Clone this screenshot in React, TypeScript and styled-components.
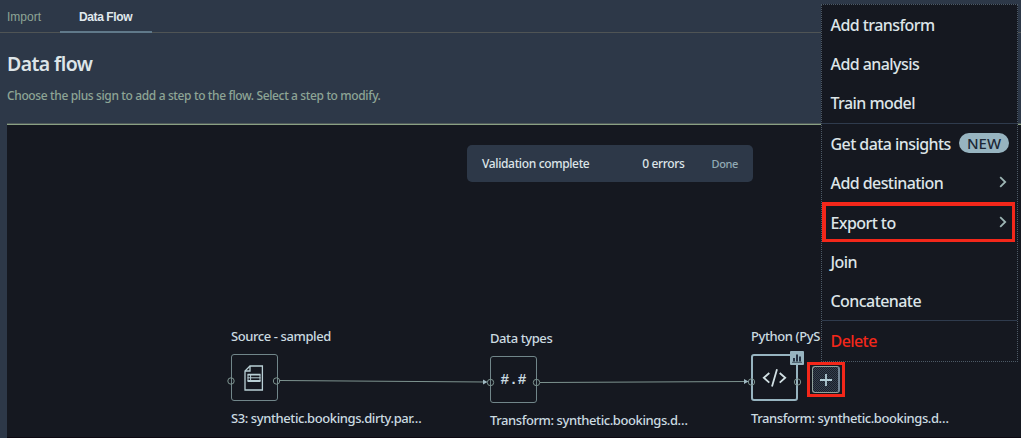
import React from 'react';
import styled, { createGlobalStyle, css } from 'styled-components';

const color = {
  header: '#2d3848',
  canvas: '#151820',
  text: '#dde5e8',
  label: '#cbdbe0',
  muted: '#8ea596',
  accent: '#97b4c0',
  line: '#71868a',
  red: '#f3271a',
};

const GlobalStyle = createGlobalStyle`
  *, *::before, *::after { box-sizing: border-box; }
  body {
    margin: 0;
    overflow: hidden;
    background: ${color.header};
    font-family: 'Noto Sans', 'Open Sans', sans-serif;
    font-weight: 500;
    color: ${color.text};
  }
`;

const Page = styled.div`
  position: relative;
  display: flex;
  flex-direction: column;
  height: 438px;
  overflow: hidden;
`;

const Tabs = styled.nav`
  display: flex;
  flex: none;
  height: 33px;
  border-bottom: 1px solid #4f5455;
`;

const Tab = styled.div<{ $active?: boolean }>`
  height: 33px;
  padding: 0 19px 0 7px;
  font: 400 12px/34px 'Liberation Sans', Arial, sans-serif;
  color: ${color.muted};
  ${(p) =>
    p.$active &&
    css`
      width: 92px;
      padding: 0 19px;
      font-weight: 700;
      letter-spacing: -0.4px;
      white-space: nowrap;
      color: #e0e9ee;
      border-bottom: 2px solid #60798a;
    `}
`;

const Heading = styled.header`
  flex: none;
  height: 90px;
  padding: 18px 7px 0;
`;

const Title = styled.h1`
  margin: 0;
  font-size: 19.5px;
  font-weight: 600;
  line-height: 26px;
  letter-spacing: -0.6px;
`;

const Description = styled.p`
  margin: 10px 0 0;
  font-size: 12px;
  line-height: 18px;
  letter-spacing: -0.37px;
  color: ${color.muted};
`;

const Canvas = styled.main`
  position: relative;
  flex: 1;
  margin-left: 7px;
  background: ${color.canvas};
  border-top: 1px solid #505a5b;
  border-bottom: 1px solid #0d0912;
  box-shadow: inset 0 1px #8aa083;
`;

const Toast = styled.div`
  position: absolute;
  left: 460px;
  top: 21px;
  width: 286px;
  height: 37px;
  padding: 0 15px;
  display: flex;
  align-items: center;
  border-radius: 5px;
  background: ${color.header};
  font-size: 12px;
  letter-spacing: -0.36px;
`;

const ToastCount = styled.span`
  margin-left: auto;
`;

const ToastAction = styled.span`
  margin-left: 27px;
  font-size: 11px;
  color: #91aab4;
`;

const Edges = styled.svg`
  position: absolute;
  inset: 0;
  width: 100%;
  height: 100%;
`;

const Node = styled.section<{ $x: number; $y: number }>`
  position: absolute;
  left: ${(p) => p.$x}px;
  top: ${(p) => p.$y}px;
  width: 200px;
`;

const NodeText = styled.div`
  height: 18px;
  font-size: 13px;
  line-height: 18px;
  letter-spacing: -0.41px;
  white-space: nowrap;
  color: ${color.label};
`;

const NodeBox = styled.div<{ $selected?: boolean }>`
  position: relative;
  display: flex;
  align-items: center;
  justify-content: center;
  width: 47px;
  height: 47px;
  margin: 9px 0 8px;
  border-radius: 3px;
  border: ${(p) => (p.$selected ? `2px solid ${color.accent}` : `1px solid ${color.line}`)};
`;

const TypeGlyph = styled.span`
  font: 700 14.4px/20px 'Liberation Mono', monospace;
  color: ${color.label};
`;

const Badge = styled.span`
  position: absolute;
  right: -8px;
  top: -5px;
  display: flex;
  width: 14px;
  height: 14px;
  background: ${color.accent};
  border-radius: 1px;
`;

const Menu = styled.div`
  position: absolute;
  left: 821px;
  top: 4px;
  width: 197px;
  height: 358px;
  padding-top: 1px;
  background: ${color.canvas};
  border: 1px dotted #4d5a66;
  font-size: 16px;
  letter-spacing: -0.57px;
  white-space: nowrap;
`;

const MenuItem = styled.div<{ $danger?: boolean }>`
  display: flex;
  align-items: center;
  height: 39px;
  padding: 0 10px 0 8.5px;
  color: ${(p) => (p.$danger ? color.red : color.text)};

  svg {
    margin: 0 0 2px auto;
  }
`;

const MenuGroup = styled.div`
  &:first-child ${MenuItem} {
    padding-bottom: 2px;
  }

  & + & {
    border-top: 1px solid #2f3b4d;
  }
`;

const HighlightedItem = styled(MenuItem)`
  height: 40px;
  width: 193px;
  padding: 0 5px 0 4.5px;
  border: solid ${color.red};
  border-width: 4px 3px 3px 4px;
`;

const NewPill = styled.span`
  flex: none;
  margin: 0 -2px 1px auto;
  width: 50px;
  height: 20px;
  border-radius: 10px;
  background: ${color.accent};
  color: #1c2836;
  font-size: 15px;
  letter-spacing: 0;
  text-align: center;
  line-height: 20px;
`;

const AddHighlight = styled.div`
  position: absolute;
  left: 807px;
  top: 362px;
  width: 38px;
  height: 35px;
  display: flex;
  padding: 0;
  border: 3px solid ${color.red};
  background: ${color.canvas};
`;

const AddButton = styled.button`
  display: flex;
  align-items: center;
  justify-content: center;
  width: 28px;
  height: 27px;
  margin: 1px 2px;
  padding: 0;
  border: 1px solid #91a29c;
  border-right: 2px solid #758797;
  border-radius: 3px;
  background: repeating-conic-gradient(#343f4e 0 25%, #1b202a 0 50%) 0 0 / 2px 2px;
`;

const Chevron = () => (
  <svg width="8" height="12" viewBox="0 0 8 12" fill="none" stroke="#9db5b4" strokeWidth="1.8">
    <path d="M1.2 1.2 6.2 6 1.2 10.8" />
  </svg>
);

const DocumentIcon = () => (
  <svg width="21" height="26" viewBox="0 0 21 26" fill="none" stroke="#b9cfd5" strokeWidth="1.3">
    <path d="M6 1h12.4v24H1V6z" />
    <path d="M6 1v5H1" />
    <path d="M3.5 9.7h13M3.5 16h13" strokeWidth="1.8" />
    <path d="M3.5 12.8h13M4 9.5V16M6.6 9.5V16M16 9.5V16" strokeWidth="1" />
  </svg>
);

const CodeIcon = () => (
  <svg width="25" height="20" viewBox="0 0 25 20" fill="none" stroke="#d2e0e4" strokeWidth="1.8">
    <path d="M7.3 5 1.8 9.8l5.5 4.8M17.7 5l5.5 4.8-5.5 4.8M15 1.2 10 18.6" />
  </svg>
);

const ChartIcon = () => (
  <svg width="14" height="14" viewBox="0 0 14 14" stroke="#253243" fill="none">
    <path d="M4 10.5V7M7 10.5V3.5M10 10.5V5.5" strokeWidth="2" />
    <path d="M2 11.3h10" strokeWidth=".8" />
  </svg>
);

const ports: [number, number][] = [
  [224, 257],
  [269.5, 257],
  [483.5, 258.5],
  [529.5, 258.5],
  [744.5, 258],
  [790.5, 258],
];

export default function App() {
  return (
    <Page>
      <GlobalStyle />
      <Tabs>
        <Tab>Import</Tab>
        <Tab $active>Data Flow</Tab>
      </Tabs>
      <Heading>
        <Title>Data flow</Title>
        <Description>Choose the plus sign to add a step to the flow. Select a step to modify.</Description>
      </Heading>
      <Canvas>
        <Toast>
          <span>Validation complete</span>
          <ToastCount>0 errors</ToastCount>
          <ToastAction>Done</ToastAction>
        </Toast>
        <Node $x={224} $y={203}>
          <NodeText>Source - sampled</NodeText>
          <NodeBox>
            <DocumentIcon />
          </NodeBox>
          <NodeText>S3: synthetic.bookings.dirty.par…</NodeText>
        </Node>
        <Node $x={483} $y={205}>
          <NodeText>Data types</NodeText>
          <NodeBox>
            <TypeGlyph>#.#</TypeGlyph>
          </NodeBox>
          <NodeText>Transform: synthetic.bookings.d…</NodeText>
        </Node>
        <Node $x={744} $y={203}>
          <NodeText>Python (PyS</NodeText>
          <NodeBox $selected>
            <CodeIcon />
            <Badge>
              <ChartIcon />
            </Badge>
          </NodeBox>
          <NodeText>Transform: synthetic.bookings.d…</NodeText>
        </Node>
        <Edges>
          <g stroke="#7d938f" fill="none">
            <path d="M273 256.5 L479 258M533 258.5 L740 257.5" />
            {ports.map(([x, y]) => (
              <circle key={x} cx={x} cy={y} r="3.2" />
            ))}
          </g>
          <path d="M476 255.5l4.5 2.5-4.5 2.5zM737 255l4.5 2.5-4.5 2.5z" fill="#9fb8c1" />
        </Edges>
      </Canvas>
      <Menu>
        <MenuGroup>
          <MenuItem>Add transform</MenuItem>
          <MenuItem>Add analysis</MenuItem>
          <MenuItem>Train model</MenuItem>
        </MenuGroup>
        <MenuGroup>
          <MenuItem>
            Get data insights
            <NewPill>NEW</NewPill>
          </MenuItem>
          <MenuItem>
            Add destination
            <Chevron />
          </MenuItem>
          <HighlightedItem>
            Export to
            <Chevron />
          </HighlightedItem>
          <MenuItem>Join</MenuItem>
          <MenuItem>Concatenate</MenuItem>
        </MenuGroup>
        <MenuGroup>
          <MenuItem $danger>Delete</MenuItem>
        </MenuGroup>
      </Menu>
      <AddHighlight>
        <AddButton>
          <svg width="14" height="14" viewBox="0 0 14 14" stroke="#b2ccd5" strokeWidth="1.8">
            <path d="M7 1v12M1 7h12" />
          </svg>
        </AddButton>
      </AddHighlight>
    </Page>
  );
}
